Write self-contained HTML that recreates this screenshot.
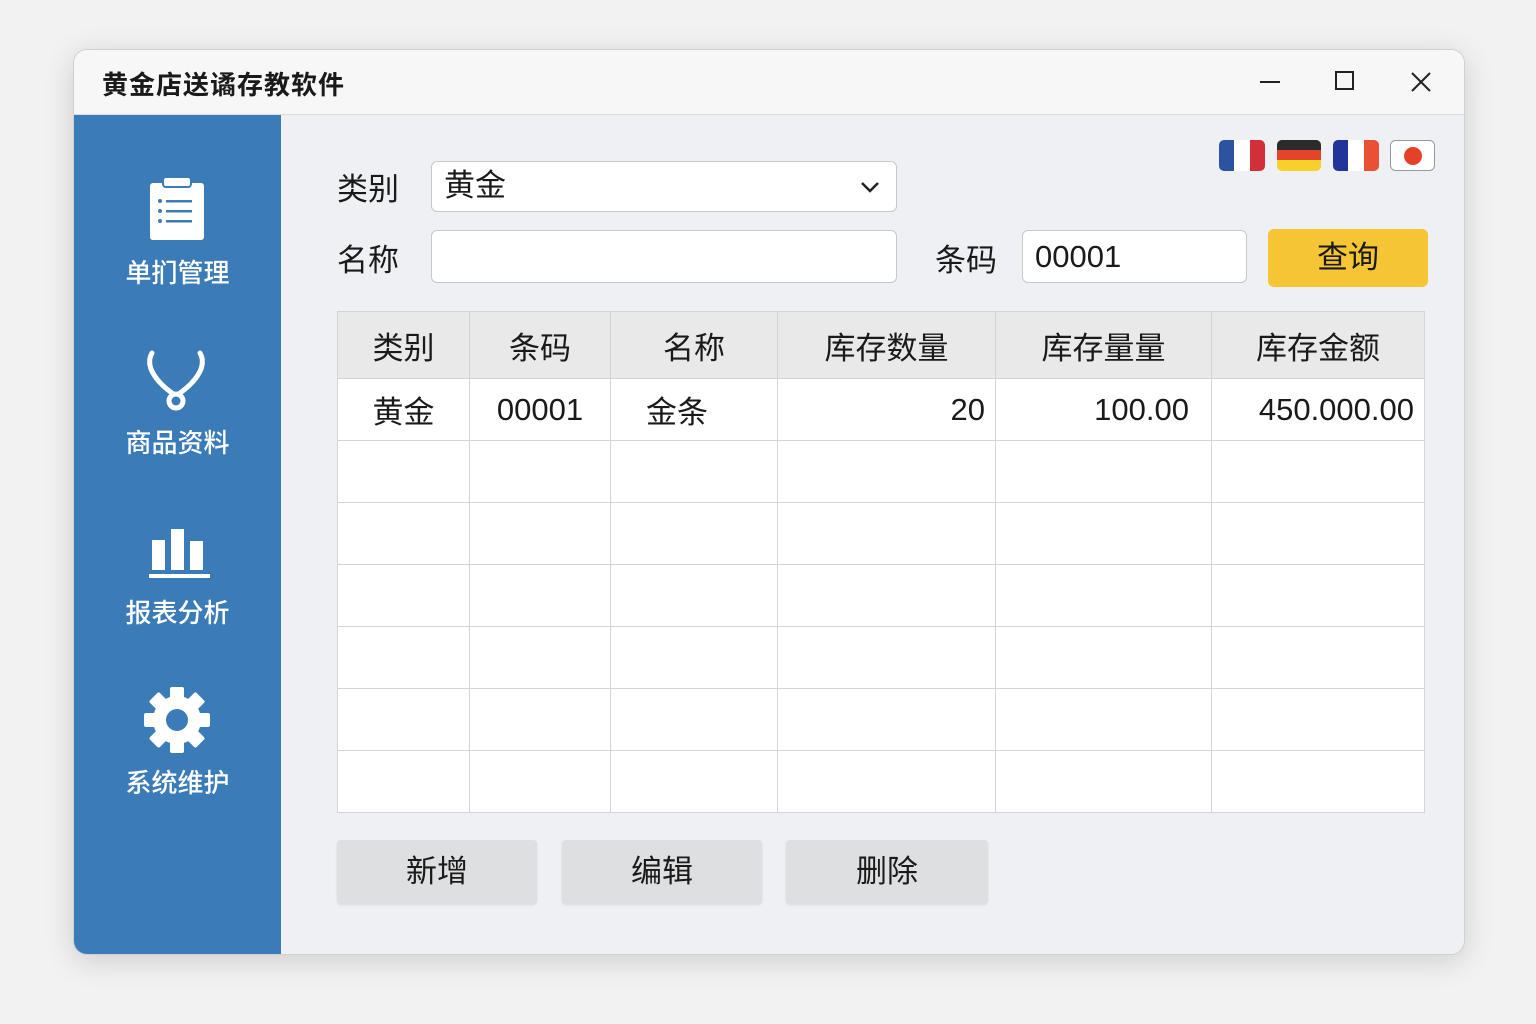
<!DOCTYPE html>
<html><head><meta charset="utf-8"><style>
*{margin:0;padding:0;box-sizing:border-box}
body{width:1536px;height:1024px;background:#f2f2f3;font-family:"Liberation Sans","Noto Sans CJK SC",sans-serif;position:relative;overflow:hidden;color:#1a1a1a}
.win{position:absolute;left:73px;top:49px;width:1392px;height:906px;border-radius:14px;background:#eef0f3;box-shadow:0 6px 30px rgba(0,0,0,.15);overflow:hidden;border:1px solid #d0d0d0}
.title{position:absolute;left:0;top:0;width:100%;height:65px;background:#f7f7f8;border-bottom:1px solid #dcdcdc}
.title span{position:absolute;left:28px;top:15px;font-size:26px;font-weight:bold;letter-spacing:1px}
.side{position:absolute;left:0;top:65px;width:207px;height:841px;background:#3a7bb8}
.nav{position:absolute;left:0;width:207px;text-align:center;color:#fff;font-size:26px;font-weight:500}
.abs{position:absolute}
.lbl{position:absolute;font-size:31px}
.inp{position:absolute;background:#fff;border:1px solid #c8c8c8;border-radius:6px;font-size:31px;padding-left:12px}
table{position:absolute;left:263px;top:261px;border-collapse:collapse;background:#fff}
td,th{border:1px solid #d4d4d4;font-size:31px;font-weight:normal;height:62px;padding:0 10px}
th{background:#e9e9ea;height:67px}
.btn{position:absolute;top:790px;height:64px;background:#dedfe0;border-radius:4px;font-size:31px;text-align:center;line-height:64px;box-shadow:0 1px 2px rgba(0,0,0,.1)}
</style></head><body>
<div class="win">
<div class="title"><span>黄金店送谲存教软件</span>
<svg class="abs" style="left:1180px;top:18px" width="180" height="30"><line x1="6" y1="14" x2="26" y2="14" stroke="#222" stroke-width="2"/><rect x="82" y="4" width="17" height="17" fill="none" stroke="#222" stroke-width="2"/><path d="M158 5 L176 23 M176 5 L158 23" stroke="#222" stroke-width="2"/></svg>
</div>
<div class="side">
<svg class="abs" style="left:75px;top:62px" width="56" height="64"><rect x="1" y="6" width="54" height="57" rx="3" fill="#fff"/><rect x="14" y="0" width="28" height="10" rx="3" fill="#fff" stroke="#3a7bb8" stroke-width="2"/><g fill="#3a7bb8"><circle cx="11" cy="24" r="2"/><circle cx="11" cy="34" r="2"/><circle cx="11" cy="44" r="2"/><rect x="17" y="23" width="26" height="2.5"/><rect x="17" y="33" width="26" height="2.5"/><rect x="17" y="43" width="26" height="2.5"/></g></svg>
<div class="nav" style="top:138px">单扪管理</div>
<svg class="abs" style="left:70px;top:232px" width="66" height="66"><path d="M8 6 C0 20 14 36 28 46 M56 6 C64 20 50 36 36 46" fill="none" stroke="#fff" stroke-width="5" stroke-linecap="round"/><circle cx="32" cy="54" r="7" fill="none" stroke="#fff" stroke-width="5"/></svg>
<div class="nav" style="top:308px">商品资料</div>
<svg class="abs" style="left:74px;top:402px" width="64" height="64"><rect x="4" y="23" width="13" height="30" fill="#fff"/><rect x="23" y="12" width="13" height="41" fill="#fff"/><rect x="42" y="24" width="13" height="29" fill="#fff"/><rect x="1" y="57" width="61" height="4" fill="#fff"/></svg>
<div class="nav" style="top:478px">报表分析</div>
<svg class="abs" style="left:70px;top:572px" width="66" height="66" viewBox="-33 -33 66 66"><g fill="#fff"><circle r="24"/><g id="t"><rect x="-7" y="-33" width="14" height="14" rx="2"/></g><use href="#t" transform="rotate(45)"/><use href="#t" transform="rotate(90)"/><use href="#t" transform="rotate(135)"/><use href="#t" transform="rotate(180)"/><use href="#t" transform="rotate(225)"/><use href="#t" transform="rotate(270)"/><use href="#t" transform="rotate(315)"/></g><circle r="11" fill="#3a7bb8"/></svg>
<div class="nav" style="top:648px">系统维护</div>
</div>
<svg class="abs" style="left:1145px;top:90px" width="220" height="32">
<defs>
<clipPath id="c1"><rect x="0" y="0" width="46" height="31" rx="5"/></clipPath>
<clipPath id="c2"><rect x="58" y="0" width="44" height="31" rx="5"/></clipPath>
<clipPath id="c3"><rect x="114" y="0" width="46" height="31" rx="5"/></clipPath>
</defs>
<g clip-path="url(#c1)"><rect x="0" y="0" width="46" height="31" fill="#fff"/><rect x="0" y="0" width="15" height="31" fill="#2d52a0"/><rect x="31" y="0" width="15" height="31" fill="#d23038"/></g>
<g clip-path="url(#c2)"><rect x="58" y="0" width="44" height="31" fill="#f5d12c"/><rect x="58" y="0" width="44" height="20" fill="#e4452a"/><rect x="58" y="0" width="44" height="10" fill="#2b2b2b"/></g>
<g clip-path="url(#c3)"><rect x="114" y="0" width="46" height="31" fill="#fff"/><rect x="114" y="0" width="15" height="31" fill="#22339a"/><rect x="145" y="0" width="15" height="31" fill="#ea5033"/></g>
<rect x="171.5" y="0.5" width="44" height="30" rx="5" fill="#fff" stroke="#999"/><circle cx="194" cy="16" r="9" fill="#e4402a"/></svg>
<div class="lbl" style="left:263px;top:114px">类别</div>
<div class="inp" style="left:357px;top:111px;width:466px;height:51px;line-height:48px">黄金<svg class="abs" style="left:428px;top:18px" width="20" height="14"><path d="M2 3 L10 11 L18 3" fill="none" stroke="#222" stroke-width="2.5"/></svg></div>
<div class="lbl" style="left:263px;top:185px">名称</div>
<div class="inp" style="left:357px;top:180px;width:466px;height:53px"></div>
<div class="lbl" style="left:861px;top:185px">条码</div>
<div class="inp" style="left:948px;top:180px;width:225px;height:53px;line-height:52px">00001</div>
<div class="abs" style="left:1194px;top:179px;width:160px;height:58px;background:#f5c535;border-radius:6px;font-size:31px;text-align:center;line-height:58px">查询</div>
<table>
<tr><th style="width:132px">类别</th><th style="width:141px">条码</th><th style="width:167px">名称</th><th style="width:218px">库存数量</th><th style="width:216px">库存量量</th><th style="width:213px">库存金额</th></tr>
<tr><td style="text-align:center">黄金</td><td style="text-align:center">00001</td><td style="text-align:left;padding-left:35px">金条</td><td style="text-align:right">20</td><td style="text-align:right;padding-right:22px">100.00</td><td style="text-align:right">450.000.00</td></tr>
<tr><td></td><td></td><td></td><td></td><td></td><td></td></tr>
<tr><td></td><td></td><td></td><td></td><td></td><td></td></tr>
<tr><td></td><td></td><td></td><td></td><td></td><td></td></tr>
<tr><td></td><td></td><td></td><td></td><td></td><td></td></tr>
<tr><td></td><td></td><td></td><td></td><td></td><td></td></tr>
<tr><td></td><td></td><td></td><td></td><td></td><td></td></tr>
</table>
<div class="btn" style="left:263px;width:200px">新增</div>
<div class="btn" style="left:488px;width:200px">编辑</div>
<div class="btn" style="left:712px;width:202px">删除</div>
</div>
</body></html>
